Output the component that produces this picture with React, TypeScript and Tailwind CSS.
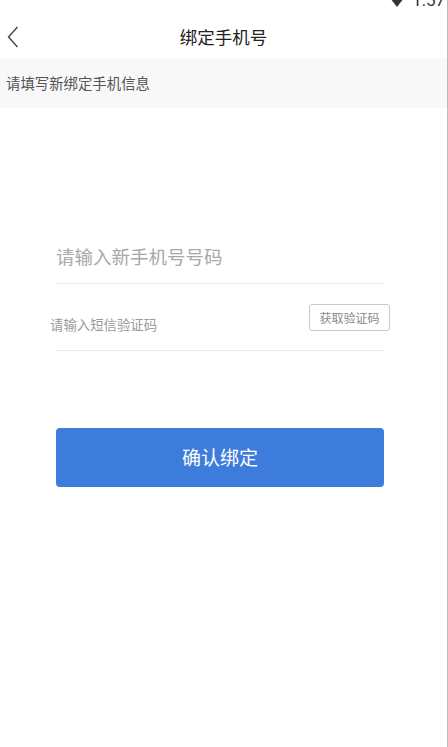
import { useState } from "react";

const font = { fontFamily: '"Noto Sans CJK SC", "Noto Sans", sans-serif' };

function StatusBar() {
  return (
    <div className="flex h-[9px] items-end justify-end overflow-hidden pr-[2px]">
      <div className="flex items-end gap-[8px] leading-none text-[#333]">
        <svg width="14" height="10" viewBox="0 0 14 10" className="mb-[1px]">
          <path d="M0 0 L14 0 L7 9 Z" fill="#333" />
        </svg>
        <span className="text-[17px] leading-[17px]" style={{ fontFamily: '"Roboto", sans-serif' }}>
          1:57
        </span>
      </div>
    </div>
  );
}

function NavBar() {
  return (
    <div className="relative flex h-[49px] items-center justify-center">
      <button className="absolute left-[5px] top-[15px] p-[2px]" aria-label="back">
        <svg width="12" height="22" viewBox="0 0 12 22" fill="none">
          <path d="M10.5 1 L1.5 11 L10.5 21" stroke="#444" strokeWidth="1.4" />
        </svg>
      </button>
      <h1 className="mt-[7px] text-[17.5px] text-[#222]">绑定手机号</h1>
    </div>
  );
}

export default function App() {
  const [phone, setPhone] = useState("");
  const [code, setCode] = useState("");

  return (
    <div className="min-h-[747px] w-[448px] border-r border-[#bcbcbc] bg-white" style={font}>
      <StatusBar />
      <NavBar />

      <div className="flex h-[50px] items-center bg-[#f7f8f7] pl-[6px] text-[14.4px] text-[#555]">
        请填写新绑定手机信息
      </div>

      <div className="ml-[56px] w-[328px] pt-[131px]">
        <div className="border-b border-[#ececec] pb-[10px]">
          <input
            value={phone}
            onChange={(e) => setPhone(e.target.value)}
            placeholder="请输入新手机号号码"
            className="h-[34px] w-full bg-transparent text-[18.5px] outline-none placeholder:text-[#a8a8a8]"
          />
        </div>

        <div className="-ml-[6px] -mr-[6px] flex items-start justify-between pt-[20px]">
          <input
            value={code}
            onChange={(e) => setCode(e.target.value)}
            placeholder="请输入短信验证码"
            className="mt-[8px] h-[24px] w-[200px] bg-transparent text-[13.4px] outline-none placeholder:text-[#9a9a9a]"
          />
          <button className="flex h-[27px] w-[81px] items-center justify-center rounded-[3px] border border-[#c9c9c9] text-[12px] text-[#888]">
            获取验证码
          </button>
        </div>
        <div className="mt-[14px] border-b border-[#ececec]" />

        <button className="mt-[77px] flex h-[59px] w-full items-center justify-center rounded-[4px] bg-[#3e7cdc] text-[19px] text-white">
          确认绑定
        </button>
      </div>
    </div>
  );
}
